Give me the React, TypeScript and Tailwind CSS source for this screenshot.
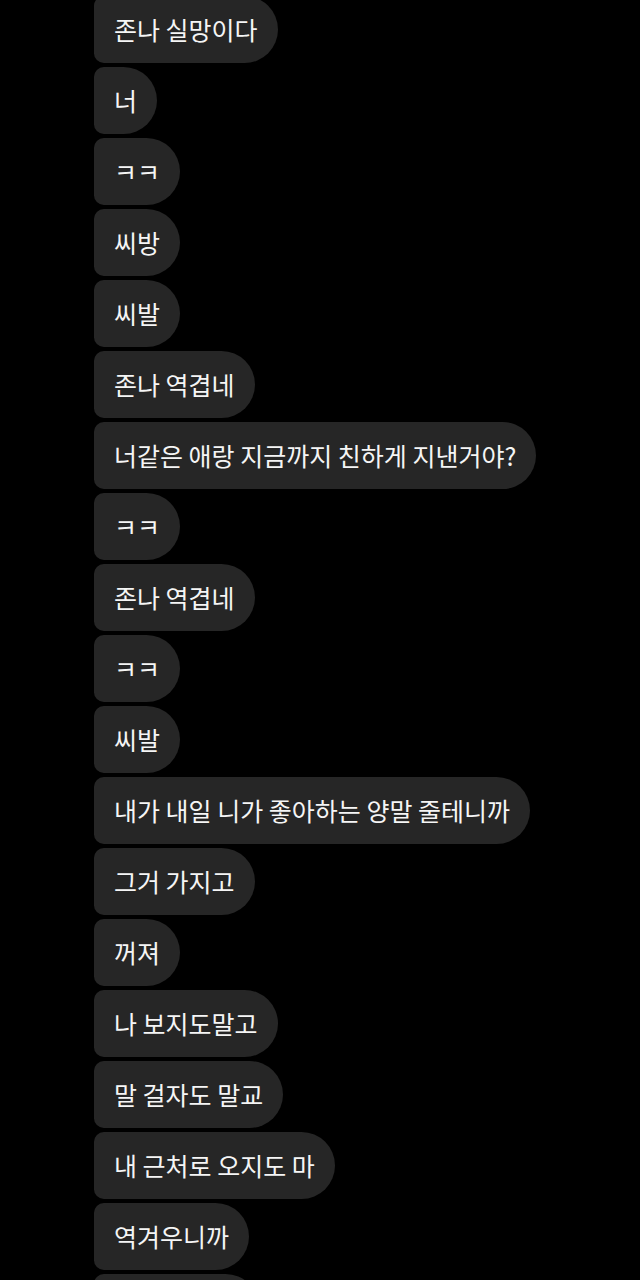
// 받은 메시지 묶음 — 왼쪽 정렬, 어두운 말풍선
const messages: string[] = [
  '존나 실망이다',
  '너',
  'ㅋㅋ',
  '씨방',
  '씨발',
  '존나 역겹네',
  '너같은 애랑 지금까지 친하게 지낸거야?',
  'ㅋㅋ',
  '존나 역겹네',
  'ㅋㅋ',
  '씨발',
  '내가 내일 니가 좋아하는 양말 줄테니까',
  '그거 가지고',
  '꺼져',
  '나 보지도말고',
  '말 걸자도 말교',
  '내 근처로 오지도 마',
  '역겨우니까',
];

function Bubble({ text }: { text: string }) {
  return (
    <div className="h-[67px] flex items-center px-[20px] bg-[#262626] text-[#f5f5f5] text-[25px] rounded-l-[10px] rounded-r-[34px] whitespace-nowrap">
      {text}
    </div>
  );
}

export default function App() {
  return (
    <div
      className="w-[640px] h-[1280px] bg-black overflow-hidden"
      style={{ fontFamily: '"Noto Sans CJK KR", "Noto Sans", sans-serif' }}
    >
      <div className="mt-[-4px] pl-[94px] flex flex-col items-start gap-[4px]">
        {messages.map((m, i) => (
          <Bubble key={i} text={m} />
        ))}
        <div className="h-[67px] w-[165px] bg-[#262626] rounded-l-[10px] rounded-r-[34px]" />
      </div>
    </div>
  );
}
